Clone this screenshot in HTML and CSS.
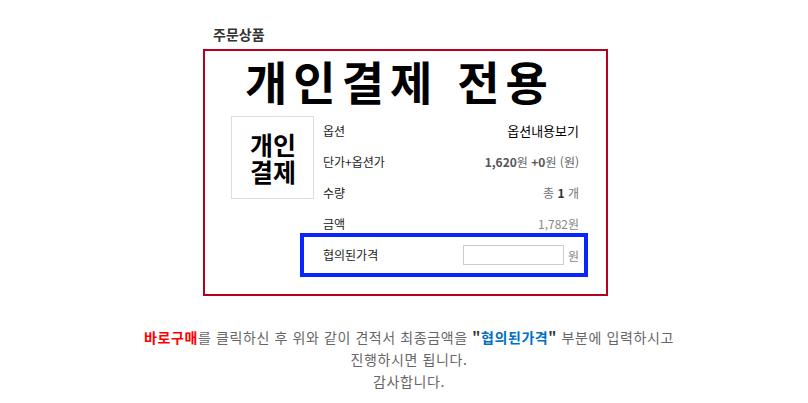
FILE: index.html
```html
<!DOCTYPE html>
<html lang="ko">
<head>
<meta charset="utf-8">
<title>주문상품</title>
<link rel="stylesheet" href="styles.css">
</head>
<body>
<h2 class="heading">주문상품</h2>
<div class="order">
  <div class="title">개인결제 전용</div>
  <div class="body">
    <div class="thumb"><span class="tl">개인</span><span class="tl">결제</span></div>
    <div class="rows">
      <div class="row"><span class="label">옵션</span><span class="val opt">옵션내용보기</span></div>
      <div class="row"><span class="label">단가+옵션가</span><span class="val"><b>1,620</b>원 <b>+0</b>원 (원)</span></div>
      <div class="row"><span class="label">수량</span><span class="val qty">총 <b>1</b> 개</span></div>
      <div class="row"><span class="label">금액</span><span class="val sum">1,782원</span></div>
    </div>
  </div>
  <div class="nego">
    <span class="label">협의된가격</span>
    <span class="nego-input"><input type="text" class="price"><span class="unit">원</span></span>
  </div>
</div>
<div class="notice">
  <div><strong class="red">바로구매</strong>를 클릭하신 후 위와 같이 견적서 최종금액을 <strong class="q">"<span class="blue">협의된가격</span>"</strong> 부분에 입력하시고</div>
  <div>진행하시면 됩니다.</div>
  <div>감사합니다.</div>
</div>
</body>
</html>
```
FILE: styles.css
```css
* { box-sizing: border-box; }
html, body { background: #fff; }
body {
  margin: 0;
  font-family: "Noto Sans CJK KR", "Noto Sans", sans-serif;
  color: #333;
}
.heading {
  margin: 0;
  padding: 26px 0 0 213px;
  font-size: 14px;
  line-height: 16px;
  font-weight: bold;
  color: #333;
}
.order {
  margin: 7px 0 0 203px;
  width: 405px;
  height: 247px;
  border: 2px solid #b5001e;
}
.title {
  margin-top: 2px;
  padding-left: 40px;
  font-size: 46px;
  line-height: 54px;
  letter-spacing: 6px;
  font-weight: bold;
  color: #000;
  white-space: nowrap;
}
.body {
  display: flex;
  align-items: flex-start;
  margin-top: 8px;
}
.thumb {
  margin: 1px 0 0 26px;
  width: 83px;
  height: 83px;
  border: 1px solid #ddd;
  display: flex;
  flex-direction: column;
  align-items: center;
  justify-content: center;
  text-align: center;
  font-size: 25px;
  line-height: 27px;
  font-weight: bold;
  color: #000;
}
.tl { display: block; height: 27px; padding-left: 1px; }
.rows {
  margin-left: 9px;
  width: 256px;
}
.row {
  height: 31px;
  display: flex;
  align-items: center;
  justify-content: space-between;
  font-size: 12px;
  line-height: 16px;
}
.label { color: #222; font-size: 12px; }
.val { color: #666; }
.val b { color: #555; font-weight: bold; }
.opt { color: #000; font-size: 13px; }
.qty { color: #777; }
.qty b { color: #333; }
.sum { color: #888; }
.nego {
  margin: -6px 0 0 95px;
  width: 288px;
  height: 44px;
  border: 4px solid #0a24ff;
  display: flex;
  align-items: center;
  justify-content: space-between;
  padding: 0 5px 2px 19px;
  font-size: 12px;
}
.nego-input { display: flex; align-items: center; gap: 4px; margin-top: 2px; }
.price {
  width: 101px;
  height: 20px;
  border: 1px solid #ccc;
  margin: 0;
  padding: 0;
  background: #fff;
}
.unit { color: #888; font-size: 12px; }
.notice {
  width: 808px;
  padding-left: 10px;
  margin-top: 30px;
  text-align: center;
  font-size: 14px;
  line-height: 22px;
  letter-spacing: 0.6px;
  color: #666;
  white-space: nowrap;
}
.red { color: #ff0000; }
.q { color: #333; }
.blue { color: #0070c0; }
```
